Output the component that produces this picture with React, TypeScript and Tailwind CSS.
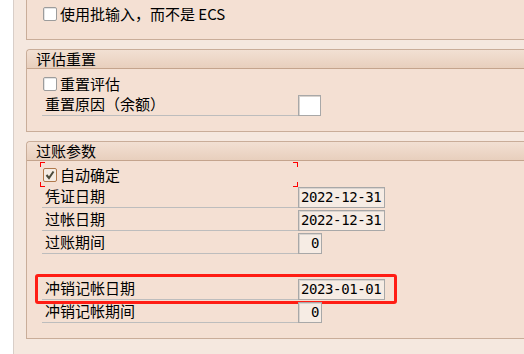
import { ReactNode } from 'react';

function CheckBox({ checked }: { checked?: boolean }) {
  if (checked) {
    return (
      <span className="flex h-[14px] w-[14px] items-center justify-center rounded-[2px] border border-[#b0784a] bg-[#f4ece4]">
        <svg width="10" height="10" viewBox="0 0 10 10">
          <path d="M1.5 5 L4 8 L8.5 1.5" fill="none" stroke="#4a4a3a" strokeWidth="2" />
        </svg>
      </span>
    );
  }
  return <span className="h-[14px] w-[14px] rounded-[2px] border border-[#9c9c9c] bg-white shadow-[inset_1px_1px_0_#e4e4e4]" />;
}

function CheckRow({ label, checked, top = 'pt-[7px]' }: { label: string; checked?: boolean; top?: string }) {
  return (
    <div className={`flex h-[24px] items-start gap-[3px] pl-[16px] ${top}`}>
      <CheckBox checked={checked} />
      <span className="leading-[14px]">{label}</span>
    </div>
  );
}

function FieldRow({ label, children }: { label: string; children?: ReactNode }) {
  return (
    <div className="relative flex h-[23px] items-end pl-[15px]">
      <div className="flex h-[23px] w-[256px] items-center border-b border-[#bdbdbd] pl-[3px]">{label}</div>
      {children}
    </div>
  );
}

function ValueBox({ value, width, right, white }: { value?: string; width: string; right?: boolean; white?: boolean }) {
  return (
    <div
      className={`flex h-[21px] ${width} items-center border border-[#a8a8a8] shadow-[inset_1px_1px_0_#d9d3ce] font-['DejaVu_Sans_Mono',monospace] text-[14px] tracking-[-0.4px] ${
        right ? 'justify-end pr-[2px]' : 'pl-[2px]'
      } ${white ? 'bg-white' : 'bg-[#f6ece4]'}`}
    >
      {value}
    </div>
  );
}

function Panel({ title, children, body }: { title: string; children: ReactNode; body: string }) {
  return (
    <div className="rounded-tl-[4px] border-t border-b border-l border-[#c9ad99] bg-[#f4e0d3]">
      <div className="flex h-[19px] items-center rounded-tl-[4px] border-b border-[#c4a48d] bg-gradient-to-b from-[#f2e0d3] to-[#e8cfbd] pl-[9px]">
        {title}
      </div>
      <div className={body}>{children}</div>
    </div>
  );
}

export default function App() {
  return (
    <div className="flex h-[354px] w-[524px] overflow-hidden bg-[#f5e8df] font-['Noto_Sans_CJK_SC',sans-serif] text-[15px] text-black">
      <div className="w-[13px] bg-white" />
      <div className="w-px bg-[#d8cec8]" />
      <div className="w-[12px]" />

      <div className="flex flex-1 flex-col">
        {/* 批输入 */}
        <div className="h-[40px] border-b border-l border-[#c9ad99] bg-[#f4e0d3]">
          <CheckRow label="使用批输入，而不是 ECS" />
        </div>

        <div className="h-[9px]" />

        <Panel title="评估重置" body="h-[62px]">
          <CheckRow label="重置评估" top="pt-[8px]" />
          <FieldRow label="重置原因（余额）">
            <ValueBox width="w-[23px]" white />
          </FieldRow>
        </Panel>

        <div className="h-[9px]" />

        <Panel title="过账参数" body="h-[177px]">
          <div className="relative">
            <CheckRow label="自动确定" checked />
            {/* 焦点框 */}
            <div className="absolute left-[13px] top-[1px] h-[25px] w-[258px]">
              <span className="absolute left-0 top-0 h-[5px] w-[5px] border-l border-t border-[#ff0000]" />
              <span className="absolute right-0 top-0 h-[5px] w-[5px] border-r border-t border-[#ff0000]" />
              <span className="absolute bottom-0 left-0 h-[5px] w-[5px] border-b border-l border-[#ff0000]" />
              <span className="absolute bottom-0 right-0 h-[5px] w-[5px] border-b border-r border-[#ff0000]" />
            </div>
          </div>
          <FieldRow label="凭证日期">
            <ValueBox value="2022-12-31" width="w-[87px]" />
          </FieldRow>
          <FieldRow label="过帐日期">
            <ValueBox value="2022-12-31" width="w-[87px]" />
          </FieldRow>
          <FieldRow label="过账期间">
            <ValueBox value="0" width="w-[24px]" right />
          </FieldRow>
          <div className="h-[23px]" />
          <FieldRow label="冲销记帐日期">
            <ValueBox value="2023-01-01" width="w-[87px]" />
            <div className="pointer-events-none absolute left-[8px] top-[-3px] h-[30px] w-[362px] rounded-[3px] border-[3px] border-[#ff1d14]" />
          </FieldRow>
          <FieldRow label="冲销记帐期间">
            <ValueBox value="0" width="w-[24px]" right />
          </FieldRow>
        </Panel>
      </div>
    </div>
  );
}
